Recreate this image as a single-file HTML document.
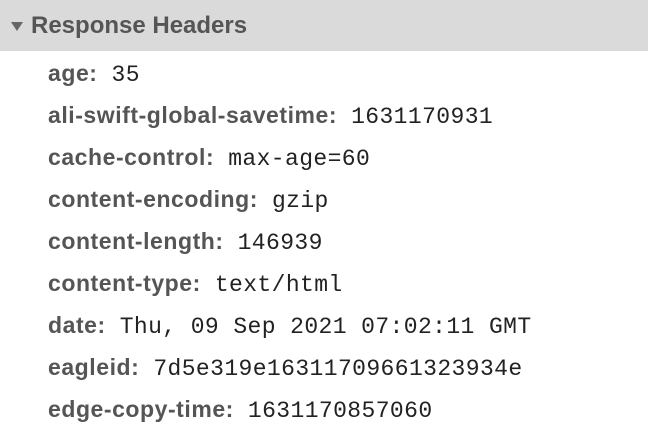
<!DOCTYPE html>
<html><head><style>
body{margin:0;width:648px;height:428px;background:#fff;overflow:hidden;font-family:"Liberation Sans",sans-serif;}
.hd{height:51px;background:#dadada;position:relative;}
.hd span{position:absolute;left:31px;top:12px;font-size:24px;font-weight:bold;color:#555;}
.tri{position:absolute;left:11px;top:22px;width:0;height:0;border-left:6px solid transparent;border-right:6px solid transparent;border-top:9px solid #666;}
.r{position:absolute;left:48px;height:42px;line-height:42px;white-space:nowrap;}
.k{font-weight:bold;font-size:23px;color:#555;letter-spacing:0.55px;}
.v{font-family:"Liberation Mono",monospace;font-size:23px;color:#222;margin-left:14px;letter-spacing:0.4px;}
</style></head><body>
<div class="hd"><div class="tri"></div><span>Response Headers</span></div>
<div class="r" style="top:52px"><span class="k">age:</span><span class="v">35</span></div>
<div class="r" style="top:94px"><span class="k">ali-swift-global-savetime:</span><span class="v">1631170931</span></div>
<div class="r" style="top:136px"><span class="k">cache-control:</span><span class="v">max-age=60</span></div>
<div class="r" style="top:178px"><span class="k">content-encoding:</span><span class="v">gzip</span></div>
<div class="r" style="top:220px"><span class="k">content-length:</span><span class="v">146939</span></div>
<div class="r" style="top:262px"><span class="k">content-type:</span><span class="v">text/html</span></div>
<div class="r" style="top:304px"><span class="k">date:</span><span class="v">Thu, 09 Sep 2021 07:02:11 GMT</span></div>
<div class="r" style="top:346px"><span class="k">eagleid:</span><span class="v">7d5e319e16311709661323934e</span></div>
<div class="r" style="top:388px"><span class="k">edge-copy-time:</span><span class="v">1631170857060</span></div>
</body></html>
